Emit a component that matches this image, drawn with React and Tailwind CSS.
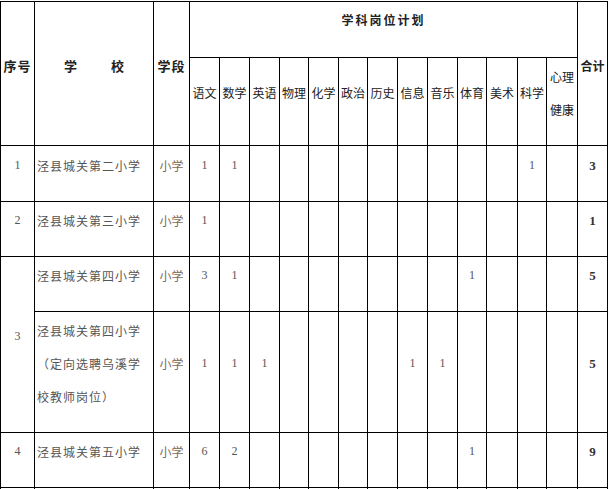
const SUBJECTS = ['语文', '数学', '英语', '物理', '化学', '政治', '历史', '信息', '音乐', '体育', '美术', '科学'];
const COLS = [
  'w-[34px]', 'w-[119px]', 'w-[36px]', 'w-[30px]', 'w-[30px]', 'w-[30px]', 'w-[29px]', 'w-[30px]', 'w-[29px]',
  'w-[30px]', 'w-[30px]', 'w-[30px]', 'w-[29px]', 'w-[31px]', 'w-[29px]', 'w-[31px]', 'w-[30px]',
];

// counts per subject index (12 subjects + 心理健康)
const ROWS = [
  { no: '1', school: ['泾县城关第二小学'], counts: { 0: 1, 1: 1, 11: 1 }, total: 3, h: 'h-[56px]' },
  { no: '2', school: ['泾县城关第三小学'], counts: { 0: 1 }, total: 1, h: 'h-[55px]' },
  { no: '3', span: 2, school: ['泾县城关第四小学'], counts: { 0: 3, 1: 1, 9: 1 }, total: 5, h: 'h-[55px]' },
  { school: ['泾县城关第四小学', '（定向选聘乌溪学', '校教师岗位）'], counts: { 0: 1, 1: 1, 2: 1, 7: 1, 8: 1 }, total: 5, h: 'h-[121px]' },
  { no: '4', school: ['泾县城关第五小学'], counts: { 0: 6, 1: 2, 9: 1 }, total: 9, h: 'h-[55px]' },
];

const cell = 'border border-black align-middle p-0 pb-[17px] leading-[33px]';
const num = "font-['Liberation_Serif','Noto_Sans_CJK_SC',serif]";

export default function App() {
  return (
    <div className="w-[610px] h-[489px] overflow-hidden bg-white pt-px font-['Noto_Sans_CJK_SC','Liberation_Sans',sans-serif]">
      <table className="border-collapse table-fixed w-[608px]">
        <colgroup>
          {COLS.map((w, i) => (
            <col key={i} className={w} />
          ))}
        </colgroup>
        <thead>
          <tr className="h-[56px]">
            <th rowSpan={2} className={`${cell} text-[13px] font-bold text-[#222] tracking-[1px]`}>序号</th>
            <th rowSpan={2} className={`${cell} text-[13px] font-bold text-[#222]`}>
              <span className="inline-flex gap-[34px]"><span>学</span><span>校</span></span>
            </th>
            <th rowSpan={2} className={`${cell} text-[13px] font-bold text-[#222] tracking-[1px]`}>学段</th>
            <th colSpan={13} className="border border-black align-middle p-0 pb-[20px] leading-[33px] text-[12px] font-bold text-[#222] tracking-[2px]">学科岗位计划</th>
            <th rowSpan={2} className={`${cell} text-[12px] font-bold text-[#222]`}>合计</th>
          </tr>
          <tr className="h-[88px]">
            {SUBJECTS.map(s => (
              <th key={s} className={`${cell} pb-[18px] text-[12px] font-normal text-[#222]`}>{s}</th>
            ))}
            <th className={`${cell} pb-[18px] text-[12px] font-normal text-[#222]`}>心理<br />健康</th>
          </tr>
        </thead>
        <tbody>
          {ROWS.map((r, i) => (
            <tr key={i} className={r.h}>
              {r.no && (
                <td rowSpan={r.span || 1} className={`${cell} ${num} text-center text-[12px] text-[#555]`}>{r.no}</td>
              )}
              <td className={`${cell} pl-[2px] text-[12px] text-[#555] tracking-[1px] whitespace-nowrap`}>
                {r.school.map((l, j) => (
                  <div key={j}>{l}</div>
                ))}
              </td>
              <td className={`${cell} text-center text-[12px] text-[#7d6a55]`}>小学</td>
              {Array.from({ length: 13 }).map((_, k) => (
                <td key={k} className={`${cell} ${num} text-center text-[12px] text-[#555]`}>
                  {r.counts[k] ?? ''}
                </td>
              ))}
              <td className={`${cell} ${num} text-center text-[13px] font-bold text-[#333]`}>{r.total}</td>
            </tr>
          ))}
          <tr className="h-[40px]">
            {COLS.map((_, i) => (
              <td key={i} className="border border-black p-0"></td>
            ))}
          </tr>
        </tbody>
      </table>
    </div>
  );
}
